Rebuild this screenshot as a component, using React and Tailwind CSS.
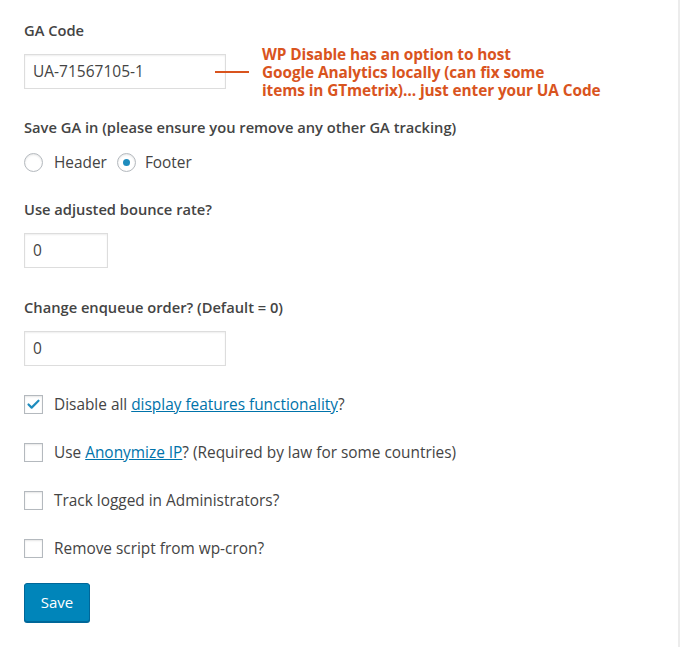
import { Check } from 'lucide-react';

const FONT = { fontFamily: '"Open Sans", "Noto Sans", sans-serif' };

export default function App() {
    return (
        <div className="min-h-[647px] w-[680px] border-r-2 border-[#ececec] bg-white text-[#444]" style={FONT}>
            <div className="px-6 pt-[19px]">
                <h2 className="text-[14.7px] font-semibold leading-[22px]">GA Code</h2>

                <div className="mt-[13px] flex h-[35px] items-start">
                    <TextField value="UA-71567105-1" width="w-[202px]" />
                    <div className="-ml-[11px] mt-[17px] h-[2px] w-[34px] shrink-0 bg-[#d9541e]" />
                    <p className="ml-[13px] -mt-[8px] whitespace-nowrap text-[15.4px] font-bold leading-[18px] tracking-[-0.1px] text-[#d9541e]">
                        WP Disable has an option to host
                        <br />
                        Google Analytics locally (can fix some
                        <br />
                        items in GTmetrix)… just enter your UA Code
                    </p>
                </div>

                <h2 className="mt-[27px] text-[14.7px] font-semibold leading-[22px]">
                    Save GA in (please ensure you remove any other GA tracking)
                </h2>
                <div className="mt-[13px] flex items-center text-[15.4px]">
                    <Radio />
                    <span className="ml-[11px]">Header</span>
                    <span className="ml-[10px]"><Radio checked /></span>
                    <span className="ml-[9px]">Footer</span>
                </div>

                <h2 className="mt-[24px] text-[14.7px] font-semibold leading-[22px]">Use adjusted bounce rate?</h2>
                <div className="mt-[13px]">
                    <TextField value="0" width="w-[84px]" />
                </div>

                <h2 className="mt-[28px] text-[14.7px] font-semibold leading-[22px]">Change enqueue order? (Default = 0)</h2>
                <div className="mt-[13px]">
                    <TextField value="0" width="w-[202px]" />
                </div>

                <div className="mt-[29px] flex flex-col gap-[29px] text-[15.4px]">
                    <CheckRow checked>
                        Disable all <a href="#" className="text-[#0073aa] underline">display features functionality</a>?
                    </CheckRow>
                    <CheckRow>
                        Use <a href="#" className="text-[#0073aa] underline">Anonymize IP</a>? (Required by law for some countries)
                    </CheckRow>
                    <CheckRow>Track logged in Administrators?</CheckRow>
                    <CheckRow>Remove script from wp-cron?</CheckRow>
                </div>

                <button className="mt-[25px] h-[39px] w-[66px] rounded-[3px] border border-[#006799] bg-[#0085ba] text-[15px] text-white shadow-[0_1px_0_#006799]">
                    Save
                </button>
            </div>
        </div>
    );
}

function TextField({ value, width }) {
    return (
        <div className={`${width} flex h-[35px] shrink-0 items-center border border-[#ddd] bg-white px-[8px] text-[15.5px] shadow-[inset_0_1px_2px_rgba(0,0,0,0.07)]`}>
            {value}
        </div>
    );
}

function Radio({ checked = false }) {
    return (
        <span className="flex h-[19px] w-[19px] items-center justify-center rounded-full border border-[#b4b9be] bg-white shadow-[inset_0_1px_2px_rgba(0,0,0,0.1)]">
            {checked ? <span className="h-[7px] w-[7px] rounded-full bg-[#1e8cbe]" /> : null}
        </span>
    );
}

function CheckRow({ checked = false, children }) {
    return (
        <div className="flex h-[19px] items-center">
            <span className="flex h-[19px] w-[19px] shrink-0 items-center justify-center border border-[#b4b9be] bg-white shadow-[inset_0_1px_2px_rgba(0,0,0,0.1)]">
                {checked ? <Check className="h-[15px] w-[15px] text-[#1e8cbe]" strokeWidth={3.5} /> : null}
            </span>
            <span className="ml-[11px] leading-[22px]">{children}</span>
        </div>
    );
}
